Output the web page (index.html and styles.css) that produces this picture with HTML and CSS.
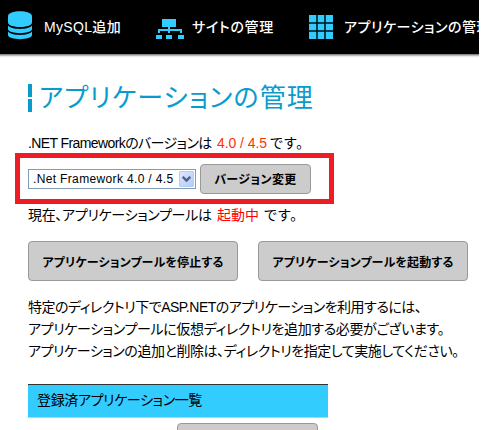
FILE: index.html
```
<!DOCTYPE html>
<html lang="ja">
<head>
<meta charset="utf-8">
<title>アプリケーションの管理</title>
<link rel="stylesheet" href="styles.css">
</head>
<body>
<nav class="nav">
  <a class="nav-item nav-db">
    <svg width="24" height="29" viewBox="0 0 24 29"><path fill="#3cf" d="M0 5C0-1.5 24-1.5 24 5v6.500C24 17.500 0 17.500 0 11.500zM0 14.500c3 4.500 21 4.500 24 0v3.500c0 5.500-24 5.500-24 0zM0 20.500c3 4.500 21 4.500 24 0V24c0 5.500-24 5.500-24 0z"/></svg>
    <span class="t-mysql">MySQL追加</span>
  </a>
  <a class="nav-item nav-site">
    <svg width="28" height="20" viewBox="0 0 28 20"><path fill="#3cf" d="M6 0h14v8h-6v2h12v4h-2v-2H14v2h-2v-2H4v2H2v-4h10V8H6zM0 16h6v4H0zM10 16h6v4h-6zM22 16h6v4h-6z"/></svg>
    <span class="t-site">サイトの管理</span>
  </a>
  <a class="nav-item nav-app">
    <svg width="24" height="24" viewBox="0 0 24 24"><path fill="#087d9c" d="M0 0h24v24H0z"/><path fill="#3cf" d="M0 0h7v7H0zM9 0h6v7H9zM17 0h7v7h-7zM0 9h7v6H0zM9 9h6v6H9zM17 9h7v6h-7zM0 17h7v7H0zM9 17h6v7H9zM17 17h7v7h-7z"/><path stroke="#000" d="M8 0v24M16 0v24M0 8h24M0 16h24"/></svg>
    <span class="t-app">アプリケーションの管理</span>
  </a>
</nav>
<main class="content">
  <h1 class="title"><i class="mark"></i><span>アプリケーションの管理</span></h1>
  <p class="line version"><span class="t-ver">.NET Frameworkのバージョンは</span><span class="orange">4.0 / 4.5</span><span class="t-desu">です。</span></p>
  <div class="highlight">
    <div class="select"><span>.Net Framework 4.0 / 4.5</span><i class="arrow"><svg width="9" height="6" viewBox="0 0 9 6"><path fill="none" stroke="#4d6185" stroke-width="2.400" d="M.7.8l3.800 3.800L8.300.8"/></svg></i></div>
    <button class="btn change">バージョン変更</button>
  </div>
  <p class="line pool"><span class="t-pool">現在、アプリケーションプールは</span><span class="red">起動中</span><span class="t-desu">です。</span></p>
  <div class="actions">
    <button class="btn">アプリケーションプールを停止する</button>
    <button class="btn">アプリケーションプールを起動する</button>
  </div>
  <div class="note">
    <p class="n1">特定のディレクトリ下でASP.NETのアプリケーションを利用するには、</p>
    <p class="n2">アプリケーションプールに仮想ディレクトリを追加する必要がございます。</p>
    <p class="n3">アプリケーションの追加と削除は、ディレクトリを指定して実施してください。</p>
  </div>
  <div class="list-head">登録済アプリケーション一覧</div>
  <button class="btn more"></button>
</main>
</body>
</html>
```
FILE: styles.css
```
* { box-sizing: border-box; }
html { overflow: hidden; }
body {
  margin: 0;
  height: 430px;
  overflow: hidden;
  background: #fff;
  color: #000;
  font: 14px/22px "Liberation Sans", "Noto Sans CJK JP", sans-serif;
  font-feature-settings: "palt";
  white-space: nowrap;
}
p, h1 { margin: 0; font-weight: 400; }
svg { display: block; flex: none; }

.nav {
  display: flex;
  width: 479px;
  height: 58px;
  overflow: hidden;
  background: linear-gradient(#000 54px, #777 54px, #999 55px, #ddd 56px, #f4f4f4 57px, #fff 58px);
}
.nav-item {
  display: flex;
  align-items: center;
  flex: none;
  height: 54px;
  color: #fff;
  font-weight: 500;
}
.nav-db { width: 148px; padding-left: 8px; gap: 12px; }
.nav-db svg { margin-top: -4px; }
.nav-site { width: 153px; padding-left: 8px; gap: 8px; }
.nav-site svg { margin-top: 4px; }
.nav-app { padding-left: 8px; gap: 11px; }
.t-mysql { letter-spacing: .33px; }
.t-site { letter-spacing: .7px; }
.t-app { letter-spacing: .52px; }

.content { width: 479px; padding-left: 28px; }
.title {
  display: flex;
  align-items: center;
  height: 28px;
  margin-top: 26px;
  gap: 7px;
  color: #0a9bce;
  font-size: 26px;
  line-height: 28px;
  letter-spacing: 1.15px;
}
.mark {
  width: 4px;
  height: 28px;
  background: linear-gradient(#0a9bce 13px, #fff 13px, #fff 15px, #0a9bce 15px);
}
.line { display: flex; height: 22px; }
.version { margin-top: 20px; }
.t-ver { width: 189px; letter-spacing: -.6px; }
.t-pool { width: 189px; letter-spacing: -.3px; }
.orange { width: 53px; color: #f30; letter-spacing: -.07px; }
.red { width: 47px; color: #f00; }
.t-desu { letter-spacing: 1px; }

.highlight {
  display: flex;
  align-items: center;
  gap: 4px;
  width: 319px;
  height: 51px;
  margin: -1px 0 0 -13px;
  padding-left: 8px;
  border: 5px solid #ee1c25;
}
.select {
  display: flex;
  align-items: center;
  justify-content: space-between;
  width: 168px;
  height: 20px;
  padding: 0 1px 0 4px;
  border: 1px solid #7f9db9;
  font-size: 12px;
  line-height: 18px;
  letter-spacing: .35px;
}
.select span { padding-top: 1px; }
.arrow {
  display: flex;
  align-items: center;
  justify-content: center;
  width: 15px;
  height: 16px;
  border: 1px solid #b9cbf3;
  border-radius: 1px;
  background: linear-gradient(135deg, #dce6ff, #b4cbfa);
}
.btn {
  width: 210px;
  height: 40px;
  padding: 4px 0 0;
  border: 1px solid #999;
  border-radius: 4px;
  background: #ccc;
  color: #000;
  font: bold 12px/18px "Liberation Sans", "Noto Sans CJK JP", sans-serif;
  font-feature-settings: "palt";
  letter-spacing: .17px;
}
.change { width: 111px; height: 30px; padding: 2px 0 0; letter-spacing: .4px; }
.actions { display: flex; gap: 20px; margin-top: 15px; }
.note { margin-top: 15px; }
.n1 { letter-spacing: -.49px; }
.n2 { letter-spacing: -.36px; }
.n3 { letter-spacing: -.43px; }
.list-head {
  width: 300px;
  height: 34px;
  margin-top: 22px;
  padding: 4px 0 0 9px;
  border-top: 1px solid #333;
  border-bottom: 1px solid #ccc;
  background: #3cf;
  letter-spacing: -.368px;
}
.more { display: block; width: 141px; margin: 5px 0 0 149px; }
```
